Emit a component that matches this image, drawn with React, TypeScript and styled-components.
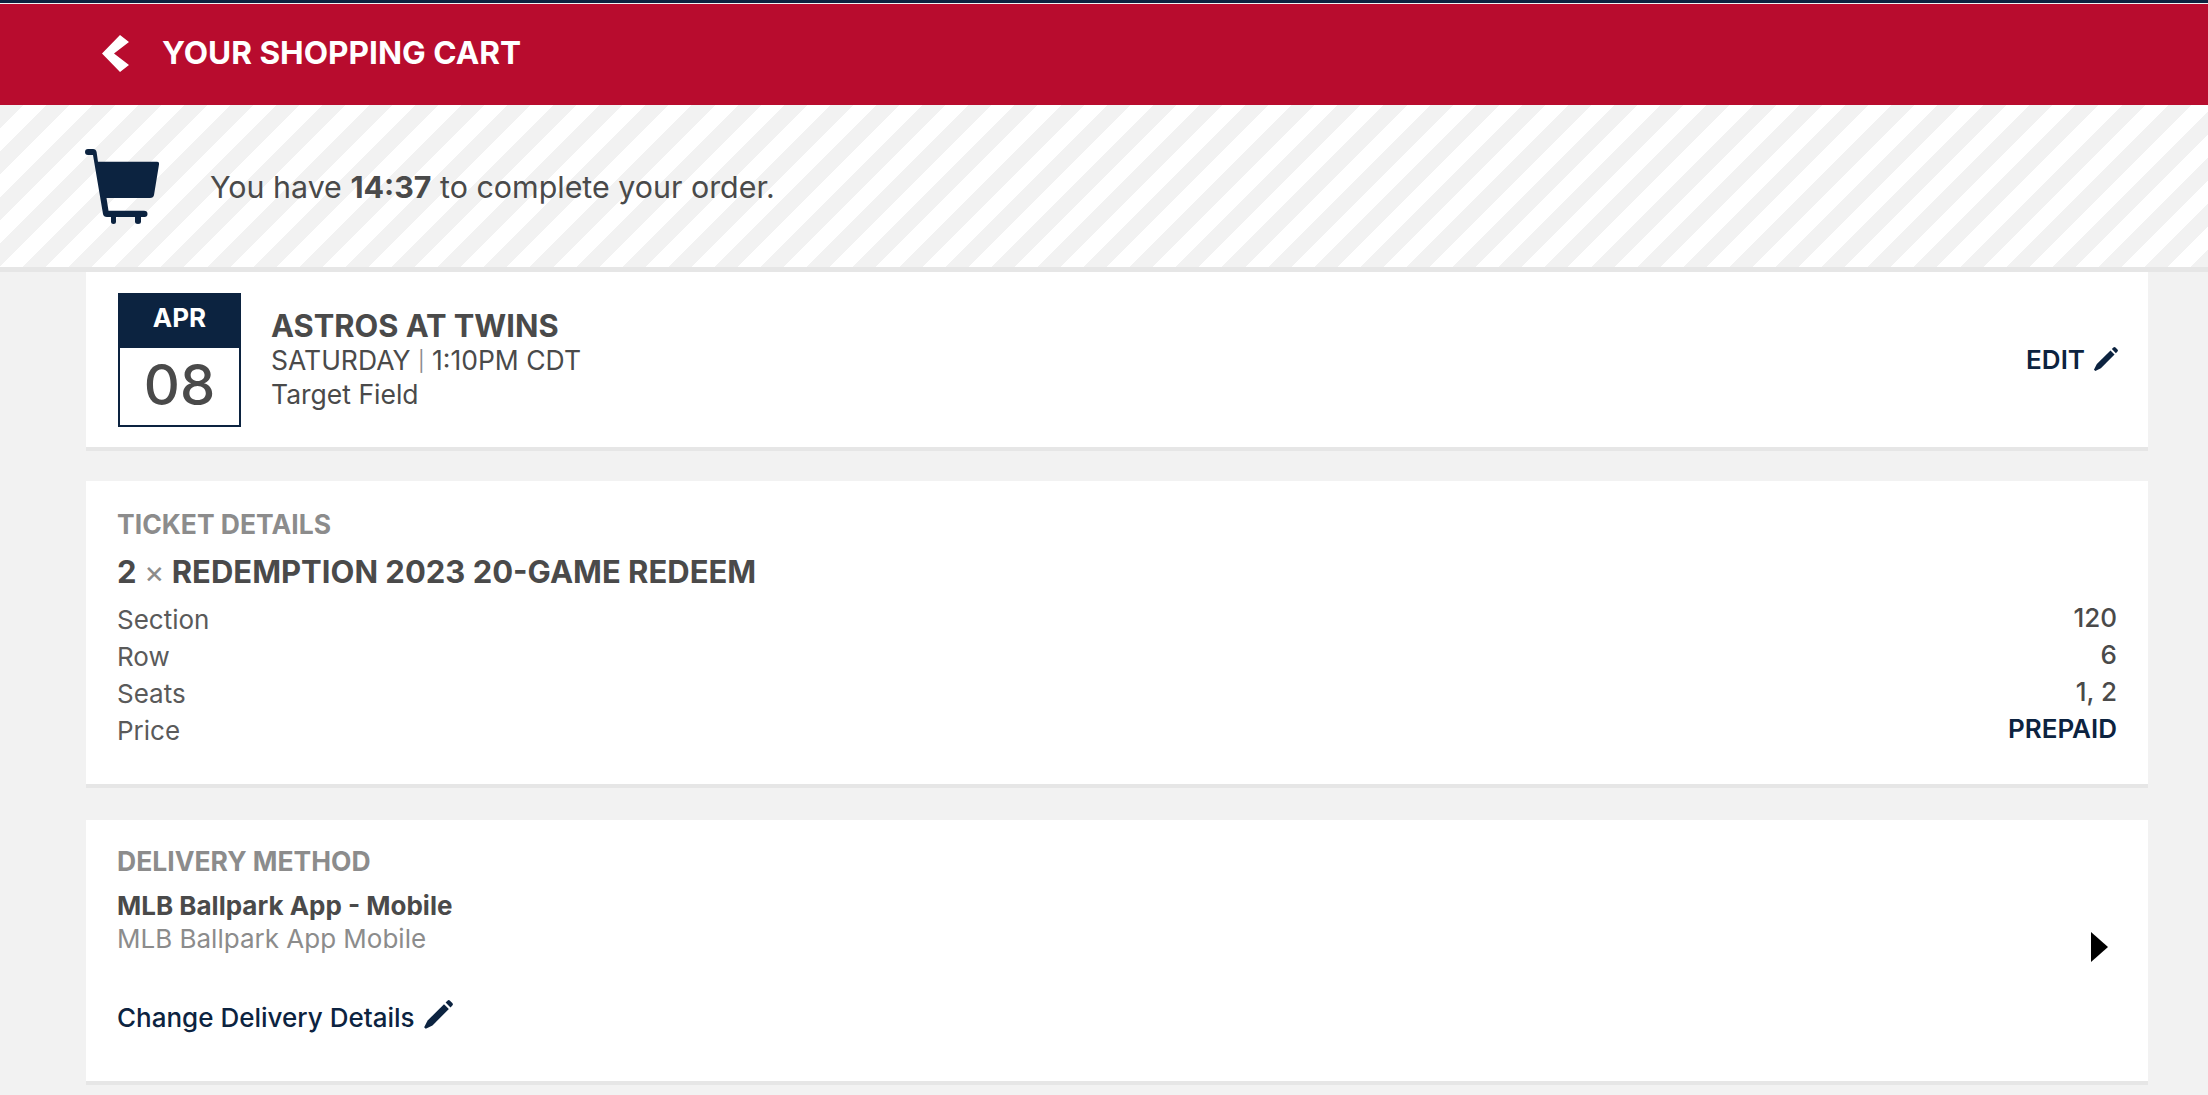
import styled, { createGlobalStyle } from "styled-components"

const GlobalStyle = createGlobalStyle`
  html, body {
    margin: 0;
    height: 100%;
    overflow: hidden;
    background: #f2f2f2;
    font-family: "Inter", "Lato", sans-serif;
    color: #4a4a4a;
  }
`

function PencilIcon({ size }: { size: number }) {
  return (
    <svg width={size} height={size} viewBox="0 0 26 26" fill="#0c2340">
      <path d="M18.2 3.6 22.4 7.8 8.2 22 2.4 25 1 23.6 4 17.8Z" />
      <path d="M19.6 2.2 21.2.6a1.6 1.6 0 0 1 2.2 0l2 2a1.6 1.6 0 0 1 0 2.2l-1.6 1.6Z" />
    </svg>
  )
}

export default function App() {
  return (
    <Page>
      <GlobalStyle />
      <TopBar>
        <BackIcon width="28" height="37" viewBox="0 0 28 37">
          <path d="M18 0 27 7 12 18.500 27 30 18 37 0 18.500Z" fill="#fff" />
        </BackIcon>
        <Title>YOUR SHOPPING CART</Title>
      </TopBar>

      <TimerBar>
        <svg width="74" height="75" viewBox="0 0 74 75" fill="#0c2340">
          <path d="M3 0H8Q11 0 11.600 3L13 12.700H72Q74.500 12.700 74 15.500L69 46Q68.500 49 65 49H21.500L23.500 61.700H59Q62.500 61.700 62.500 65T59 68H56V72.500Q56 75 53 75T50 72.500V68H31V72.500Q31 75 28.500 75T26 72.500V68H22Q18.500 68 18 65L8 6H3Q0 6 0 3T3 0Z" />
        </svg>
        <TimerText>
          You have <strong>14:37</strong> to complete your order.
        </TimerText>
      </TimerBar>

      <Cards>
        <EventCard>
          <DateBox>
            <Month>APR</Month>
            <Day>08</Day>
          </DateBox>
          <EventInfo>
            <EventName>ASTROS AT TWINS</EventName>
            <EventLine>
              SATURDAY <Separator>|</Separator> 1:10PM CDT
            </EventLine>
            <EventLine>Target Field</EventLine>
          </EventInfo>
          <EditLink>
            EDIT <PencilIcon size={25} />
          </EditLink>
        </EventCard>

        <TicketCard>
          <SectionLabel>TICKET DETAILS</SectionLabel>
          <TicketName>
            2 <Times>×</Times> REDEMPTION 2023 20-GAME REDEEM
          </TicketName>
          <DetailColumns>
            <DetailColumn>
              <Detail>Section</Detail>
              <Detail>Row</Detail>
              <Detail>Seats</Detail>
              <Detail>Price</Detail>
            </DetailColumn>
            <ValueColumn>
              <Detail>120</Detail>
              <Detail>6</Detail>
              <Detail>1, 2</Detail>
              <Detail $strong>PREPAID</Detail>
            </ValueColumn>
          </DetailColumns>
        </TicketCard>

        <DeliveryCard>
          <div>
            <SectionLabel>DELIVERY METHOD</SectionLabel>
            <MethodName>MLB Ballpark App - Mobile</MethodName>
            <MethodNote>MLB Ballpark App Mobile</MethodNote>
            <ChangeLink>
              Change Delivery Details <PencilIcon size={30} />
            </ChangeLink>
          </div>
          <ArrowIcon width="17" height="30" viewBox="0 0 17 30">
            <path d="M0 0 17 15 0 30Z" fill="#000" />
          </ArrowIcon>
        </DeliveryCard>
      </Cards>
    </Page>
  )
}

const Page = styled.div`
  min-height: 1095px;
  border-top: 3px solid #0c2340;
`

const TopBar = styled.header`
  height: 101px;
  margin-top: 1px;
  padding-left: 102px;
  display: flex;
  align-items: center;
  gap: 32px;
  background: #b80c2e;
`

const BackIcon = styled.svg`
  flex-shrink: 0;
  margin-top: -3px;
`

const Title = styled.h1`
  margin: -4px 0 0;
  color: #fff;
  font-size: 31.6px;
  font-weight: 700;
`

const TimerBar = styled.div`
  height: 162px;
  padding-left: 85px;
  display: flex;
  align-items: center;
  gap: 51px;
  border-bottom: 5px solid #e6e6e6;
  background: repeating-linear-gradient(
    135deg,
    #f2f2f2 0 16.31px,
    #fff 16.31px 32.62px
  );
`

const TimerText = styled.div`
  margin-top: 2px;
  font-size: 30.4px;
  strong {
    font-weight: 700;
  }
`

const Cards = styled.main`
  margin: 0 60px 0 86px;
  display: flex;
  flex-direction: column;
  gap: 30px;
`

const Card = styled.section`
  background: #fff;
  border-bottom: 4px solid #e6e6e6;
  box-sizing: border-box;
`

const EventCard = styled(Card)`
  height: 179px;
  padding: 21px 30px 0 32px;
  display: flex;
  align-items: flex-start;
`

const DateBox = styled.div`
  width: 123px;
  height: 134px;
  box-sizing: border-box;
  border: 2px solid #0c2340;
  text-align: center;
`

const Month = styled.div`
  height: 53px;
  line-height: 45px;
  background: #0c2340;
  color: #fff;
  font-size: 26px;
  font-weight: 700;
`

const Day = styled.div`
  line-height: 75px;
  font-size: 56px;
  font-weight: 500;
`

const EventInfo = styled.div`
  margin: 15px 0 0 30px;
  flex: 1;
`

const EventName = styled.div`
  font-size: 30.800px;
  font-weight: 700;
  line-height: 36px;
`

const EventLine = styled.div`
  font-size: 26.5px;
  line-height: 33px;
`

const Separator = styled.span`
  color: #8c8c8c;
  font-size: 20px;
  vertical-align: 2px;
`

const EditLink = styled.div`
  margin-top: 51px;
  display: flex;
  align-items: center;
  gap: 8px;
  color: #0c2340;
  font-size: 26px;
  font-weight: 600;
`

const TicketCard = styled(Card)`
  height: 307px;
  padding: 27px 31px 0;
`

const SectionLabel = styled.div`
  color: #8c8c8c;
  font-size: 26.5px;
  font-weight: 700;
  line-height: 32px;
`

const TicketName = styled.div`
  margin-top: 14px;
  font-size: 31px;
  font-weight: 700;
  line-height: 36px;
`

const Times = styled.span`
  color: #8c8c8c;
  font-weight: 400;
`

const DetailColumns = styled.div`
  margin-top: 11px;
  display: flex;
  justify-content: space-between;
`

const DetailColumn = styled.div`
  display: flex;
  flex-direction: column;
  color: #5a5a5a;
`

const ValueColumn = styled(DetailColumn)`
  margin-top: -2px;
  align-items: flex-end;
  font-weight: 500;
  color: #4a4a4a;
`

const Detail = styled.div<{ $strong?: boolean }>`
  font-size: 26px;
  line-height: 37px;
  color: ${(p) => (p.$strong ? "#0c2340" : "inherit")};
  font-weight: ${(p) => (p.$strong ? 600 : "inherit")};
`

const DeliveryCard = styled(Card)`
  height: 265px;
  margin-top: 2px;
  padding: 25px 40px 0 31px;
  display: flex;
  align-items: flex-start;
  justify-content: space-between;
`

const MethodName = styled.div`
  margin-top: 12px;
  font-size: 26px;
  font-weight: 700;
  line-height: 33px;
`

const MethodNote = styled.div`
  color: #8c8c8c;
  font-size: 26px;
  line-height: 33px;
`

const ChangeLink = styled.div`
  margin-top: 47px;
  display: flex;
  align-items: center;
  gap: 8px;
  color: #0c2340;
  font-size: 26px;
  font-weight: 500;

  svg {
    margin-top: -6px;
  }
`

const ArrowIcon = styled.svg`
  margin-top: 87px;
`
